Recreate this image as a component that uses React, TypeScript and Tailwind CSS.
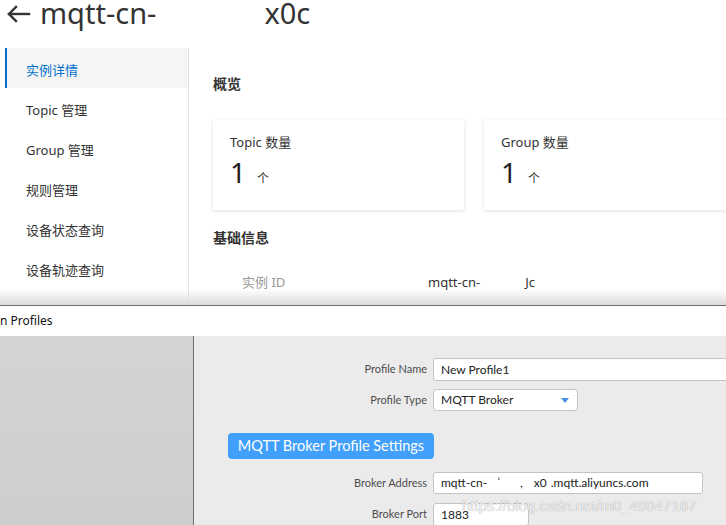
const navItems = ["实例详情", "Topic 管理", "Group 管理", "规则管理", "设备状态查询", "设备轨迹查询", "设备轨迹查询"];

function BackArrow() {
  return (
    <svg width="25" height="18" viewBox="0 0 25 18" fill="none" stroke="#333" strokeWidth="2.4" strokeLinecap="square">
      <path d="M23 9H3" />
      <path d="M10 2L3 9l7 7" />
    </svg>
  );
}

function StatCard({ label }: { label: string }) {
  return (
    <div className="h-[90px] w-[251px] shrink-0 bg-white pl-[17px] pt-[12px] shadow-[0_1px_4px_rgba(0,0,0,0.13)]">
      <p className="text-[13px] leading-[20px] text-[#333]">{label}</p>
      <div className="mt-[5px] flex items-baseline">
        <span className="text-[28px] leading-[30px] text-[#222]">1</span>
        <span className="ml-[11px] text-[12px] text-[#333]">个</span>
      </div>
    </div>
  );
}

function TopConsole() {
  return (
    <div className="relative h-[305px] overflow-hidden bg-white font-['Noto_Sans','Noto_Sans_CJK_SC',sans-serif]">
      <div className="flex h-[48px] items-start pl-[6px]">
        <div className="pt-[5px]">
          <BackArrow />
        </div>
        <h1 className="ml-[9px] text-[29px] leading-[26px] text-[#333]">
          mqtt-cn-<span className="inline-block w-[108px]" />x0c
        </h1>
      </div>
      <div className="flex h-[257px]">
        <nav className="ml-[5px] w-[184px] shrink-0 border-r border-[#e3e3e3]">
          {navItems.map((item, i) => (
            <div
              key={i}
              className={
                i === 0
                  ? "flex h-10 items-center border-l-2 border-[#0070cc] bg-[#f5f5f5] pl-[19px] pt-[6px] text-[13px] text-[#0070cc]"
                  : "flex h-10 items-center border-l-2 border-transparent pl-[19px] pt-[6px] text-[13px] text-[#333]"
              }
            >
              {item}
            </div>
          ))}
        </nav>
        <main className="flex-1 pl-[24px] pt-[26px]">
          <h2 className="text-[14px] font-bold leading-[20px] text-[#333]">概览</h2>
          <div className="mt-[26px] flex gap-[20px]">
            <StatCard label="Topic 数量" />
            <StatCard label="Group 数量" />
          </div>
          <h2 className="mt-[18px] text-[14px] font-bold leading-[20px] text-[#333]">基础信息</h2>
          <div className="mt-[24px] flex pl-[29px] text-[13px] leading-[20px]">
            <span className="w-[186px] text-[#999]">实例 ID</span>
            <span className="text-[#333]">
              mqtt-cn-<span className="inline-block w-[45px]" />Jc
            </span>
          </div>
        </main>
      </div>
      <div className="pointer-events-none absolute bottom-0 left-0 right-0 h-[16px] bg-gradient-to-b from-white/0 to-[#dcdcdc]" />
    </div>
  );
}

function Field({ label, value, width, height, children }: { label: string; value?: string; width: string; height: string; children?: React.ReactNode }) {
  return (
    <div className={`flex items-center ${height}`}>
      <span className="w-[239px] shrink-0 pr-[6px] text-right text-[11px] text-[#4d4d4d]">{label}</span>
      <div className={`flex h-full shrink-0 items-center rounded-[3px] border border-[#c4c4c4] bg-white pl-[7px] text-[12px] text-[#222] ${width}`}>
        {children ?? value}
      </div>
    </div>
  );
}

function ProfilesDialog() {
  return (
    <div className="border-t border-[#6f6f6f] font-['Lato','Open_Sans',sans-serif]">
      <div className="flex h-[30px] items-center bg-white font-['Noto_Sans',sans-serif] text-[12px] text-[#111]">
        n Profiles
      </div>
      <div className="flex h-[189px]">
        <div className="w-[194px] shrink-0 border-r border-[#6f6f6f] bg-gradient-to-b from-[#d4d4d4] to-[#cecece]" />
        <div className="flex-1 bg-[#ebebeb] pt-[22px]">
          <Field label="Profile Name" value="New Profile1" width="w-[300px]" height="h-[23px]" />
          <div className="mt-[8px]">
            <Field label="Profile Type" width="w-[145px] rounded-[4px]" height="h-[22px]">
              <span className="flex-1">MQTT Broker</span>
              <svg width="8" height="5" viewBox="0 0 8 5" className="mr-[8px]">
                <path d="M0 0h8L4 5z" fill="#4a90e2" />
              </svg>
            </Field>
          </div>
          <div className="ml-[34px] mt-[22px] flex h-[26px] w-[206px] items-center justify-center rounded-[4px] bg-[#40a0fb] text-[14.5px] text-white">
            MQTT Broker Profile Settings
          </div>
          <div className="mt-[13px]">
            <Field label="Broker Address" width="w-[270px]" height="h-[22px]">
              mqtt-cn-<span className="inline-block w-[10px]" />ˈ<span className="inline-block w-[20px]" />,
              <span className="inline-block w-[11px]" />x0<span className="inline-block w-[4px]" />.mqtt.aliyuncs.com
            </Field>
          </div>
          <div className="mt-[9px]">
            <Field label="Broker Port" value="1883" width="w-[96px]" height="h-[23px]" />
          </div>
        </div>
      </div>
    </div>
  );
}

export default function App() {
  return (
    <div className="relative h-[525px] w-[726px] overflow-hidden bg-white">
      <TopConsole />
      <ProfilesDialog />
      <span className="pointer-events-none absolute left-[462px] top-[495px] font-['Liberation_Sans',sans-serif] text-[15px] text-white/85 [text-shadow:0_0_1px_rgba(0,0,0,0.45)]">
        https://blog.csdn.net/m0_49047167
      </span>
    </div>
  );
}
